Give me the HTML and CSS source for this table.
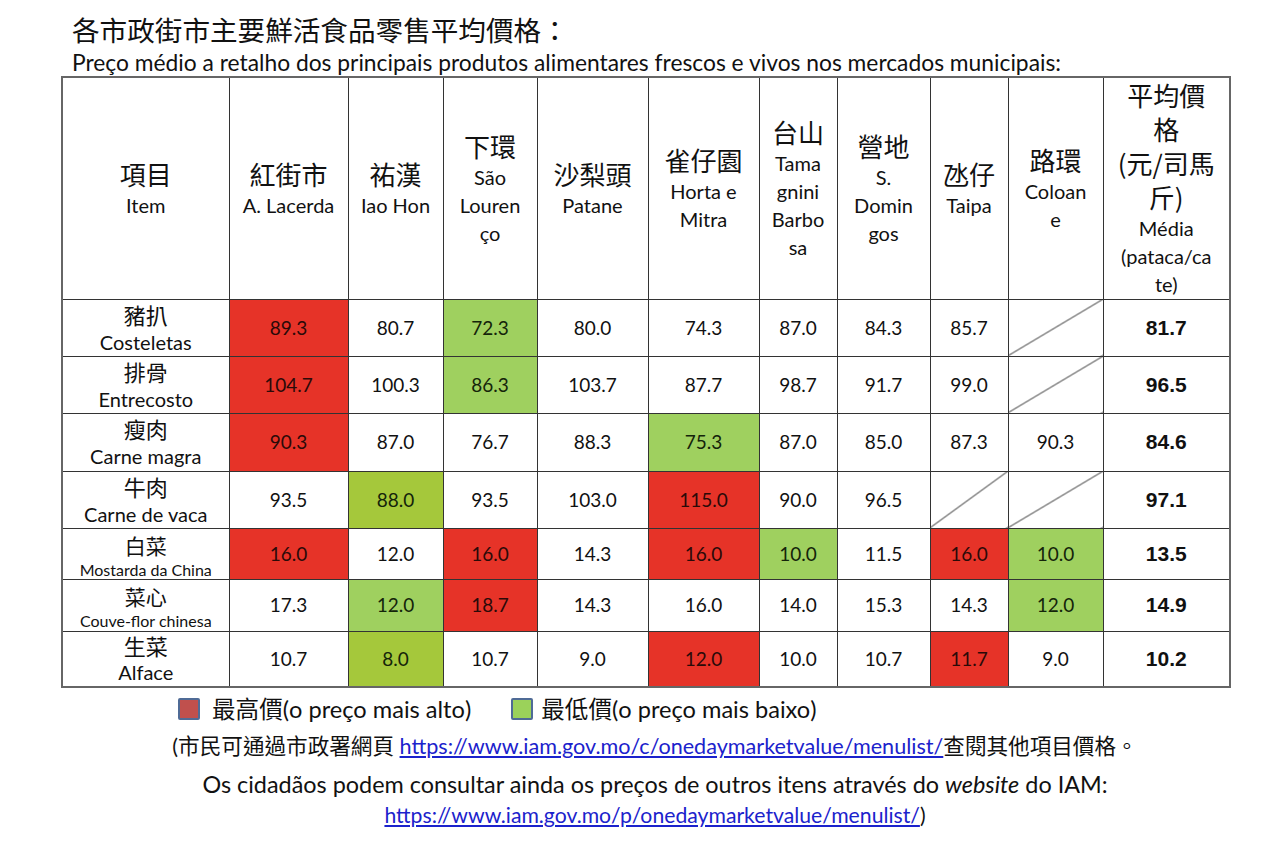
FILE: index.html
```html
<!DOCTYPE html>
<html lang="zh-Hant">
<head>
<meta charset="utf-8">
<title>各市政街市主要鮮活食品零售平均價格</title>
<link rel="stylesheet" href="styles.css">
</head>
<body>
<div class="page">
  <h1 class="title">各市政街市主要鮮活食品零售平均價格：</h1>
  <p class="subtitle">Preço médio a retalho dos principais produtos alimentares frescos e vivos nos mercados municipais:</p>
  <table class="prices">
    <colgroup>
      <col class="c-item"><col class="c-1"><col class="c-2"><col class="c-3"><col class="c-4"><col class="c-5"><col class="c-6"><col class="c-7"><col class="c-8"><col class="c-9"><col class="c-avg">
    </colgroup>
    <thead>
      <tr class="head">
        <th><span class="zh">項目</span><span class="pt">Item</span></th>
        <th><span class="zh">紅街市</span><span class="pt">A. Lacerda</span></th>
        <th><span class="zh">祐漢</span><span class="pt">Iao Hon</span></th>
        <th><span class="zh">下環</span><span class="pt">São<br>Louren<br>ço</span></th>
        <th><span class="zh">沙梨頭</span><span class="pt">Patane</span></th>
        <th><span class="zh">雀仔園</span><span class="pt">Horta e<br>Mitra</span></th>
        <th><span class="zh">台山</span><span class="pt">Tama<br>gnini<br>Barbo<br>sa</span></th>
        <th><span class="zh">營地</span><span class="pt">S.<br>Domin<br>gos</span></th>
        <th><span class="zh">氹仔</span><span class="pt">Taipa</span></th>
        <th><span class="zh">路環</span><span class="pt">Coloan<br>e</span></th>
        <th><span class="zh">平均價<br>格<br>(元/司馬<br>斤)</span><span class="pt">Média<br>(pataca/ca<br>te)</span></th>
      </tr>
    </thead>
    <tbody>
      <tr class="r1">
        <td class="item"><span class="zh">豬扒</span><span class="pt">Costeletas</span></td>
        <td class="hi">89.3</td><td>80.7</td><td class="lo">72.3</td><td>80.0</td><td>74.3</td><td>87.0</td><td>84.3</td><td>85.7</td><td class="na"></td><td class="avg">81.7</td>
      </tr>
      <tr class="r2">
        <td class="item"><span class="zh">排骨</span><span class="pt">Entrecosto</span></td>
        <td class="hi">104.7</td><td>100.3</td><td class="lo">86.3</td><td>103.7</td><td>87.7</td><td>98.7</td><td>91.7</td><td>99.0</td><td class="na"></td><td class="avg">96.5</td>
      </tr>
      <tr class="r3">
        <td class="item"><span class="zh">瘦肉</span><span class="pt">Carne magra</span></td>
        <td class="hi">90.3</td><td>87.0</td><td>76.7</td><td>88.3</td><td class="lo">75.3</td><td>87.0</td><td>85.0</td><td>87.3</td><td>90.3</td><td class="avg">84.6</td>
      </tr>
      <tr class="r4">
        <td class="item"><span class="zh">牛肉</span><span class="pt">Carne de vaca</span></td>
        <td>93.5</td><td class="lo2">88.0</td><td>93.5</td><td>103.0</td><td class="hi">115.0</td><td>90.0</td><td>96.5</td><td class="na"></td><td class="na"></td><td class="avg">97.1</td>
      </tr>
      <tr class="r5">
        <td class="item veg"><span class="zh">白菜</span><span class="pt small">Mostarda da China</span></td>
        <td class="hi">16.0</td><td>12.0</td><td class="hi">16.0</td><td>14.3</td><td class="hi">16.0</td><td class="lo">10.0</td><td>11.5</td><td class="hi">16.0</td><td class="lo">10.0</td><td class="avg">13.5</td>
      </tr>
      <tr class="r6">
        <td class="item veg"><span class="zh">菜心</span><span class="pt small">Couve-flor chinesa</span></td>
        <td>17.3</td><td class="lo">12.0</td><td class="hi">18.7</td><td>14.3</td><td>16.0</td><td>14.0</td><td>15.3</td><td>14.3</td><td class="lo">12.0</td><td class="avg">14.9</td>
      </tr>
      <tr class="r7">
        <td class="item"><span class="zh">生菜</span><span class="pt">Alface</span></td>
        <td>10.7</td><td class="lo2">8.0</td><td>10.7</td><td>9.0</td><td class="hi">12.0</td><td>10.0</td><td>10.7</td><td class="hi">11.7</td><td>9.0</td><td class="avg">10.2</td>
      </tr>
    </tbody>
  </table>

  <div class="legend">
    <span class="key"><span class="swatch swatch-hi"></span>最高價(o preço mais alto)</span>
    <span class="key"><span class="swatch swatch-lo"></span>最低價(o preço mais baixo)</span>
  </div>

  <div class="notes">
    <p class="note-zh">(市民可通過市政署網頁 <a href="#">https://www.iam.gov.mo/c/onedaymarketvalue/menulist/</a>查閱其他項目價格。</p>
    <p class="note-pt">Os cidadãos podem consultar ainda os preços de outros itens através do <em>website</em> do IAM:</p>
    <p class="note-link"><a href="#">https://www.iam.gov.mo/p/onedaymarketvalue/menulist/</a>)</p>
  </div>
</div>
</body>
</html>
```
FILE: styles.css
```css
html, body {
  margin: 0;
  padding: 0;
  background: #ffffff;
}

body {
  font-family: "Lato", "Noto Sans CJK TC", sans-serif;
  color: #111111;
}

.page {
  width: 1280px;
  height: 848px;
  padding: 9px 0 0 61px;
  box-sizing: border-box;
}

.title {
  margin: 0 0 0 11px;
  font-family: "Noto Sans CJK TC", sans-serif;
  font-weight: 400;
  font-size: 27.6px;
  line-height: 40px;
  color: #111111;
}

.subtitle {
  margin: 0 0 0 11px;
  font-size: 22.8px;
  line-height: 27px;
  color: #111111;
}

/* ---------- table ---------- */
.prices {
  margin-top: 0;
  width: 1168px;
  table-layout: fixed;
  border-collapse: collapse;
  border: 2px solid #666666;
}

.c-item { width: 167px; }
.c-1 { width: 119px; }
.c-2 { width: 95px; }
.c-3 { width: 94px; }
.c-4 { width: 111px; }
.c-5 { width: 111px; }
.c-6 { width: 78px; }
.c-7 { width: 93px; }
.c-8 { width: 78px; }
.c-9 { width: 95px; }
.c-avg { width: 127px; }

.prices th,
.prices td {
  border: 1px solid #333333;
  padding: 0;
  text-align: center;
  vertical-align: middle;
}

.prices th {
  font-weight: 400;
}

.head { height: 222px; }
.r1 { height: 56px; }
.r2 { height: 56px; }
.r3 { height: 58px; }
.r4 { height: 56px; }
.r5 { height: 50px; }
.r6 { height: 52px; }
.r7 { height: 56px; }

.zh,
.pt {
  display: block;
}

.head .zh {
  font-family: "Noto Sans CJK TC", sans-serif;
  font-size: 26px;
  line-height: 34px;
}

.head .pt {
  font-size: 20px;
  line-height: 28px;
}

.prices td {
  font-size: 19px;
  line-height: 24px;
  color: #111111;
}

.prices td.item .zh {
  font-family: "Noto Sans CJK TC", sans-serif;
  font-size: 22px;
  line-height: 28px;
}

.prices td.item .pt {
  font-size: 20px;
  line-height: 28px;
}

.r7 td.item .zh,
.r7 td.item .pt {
  line-height: 27px;
}

.prices td.item.veg {
  padding-top: 4px;
}

.prices td.item.veg .zh {
  font-size: 21px;
  line-height: 24px;
}

.prices td.item .pt.small {
  margin-top: 4px;
  font-size: 16px;
  line-height: 18px;
}

.prices td.hi { background: #e63328; color: #2a0a08; }
.prices td.lo { background: #9fd05f; color: #14240a; }
.prices td.lo2 { background: #a5c83b; color: #14240a; }

.prices td.na {
  background: linear-gradient(to bottom right,
    transparent calc(50% - 0.8px),
    #222222 50%,
    transparent calc(50% + 0.8px));
}

.prices td.avg {
  font-family: "Liberation Sans", Arial, sans-serif;
  font-weight: 700;
  font-size: 21px;
}

/* ---------- legend ---------- */
.legend {
  display: flex;
  align-items: center;
  gap: 40px;
  margin: 7px 0 0 117px;
  font-size: 23.6px;
  line-height: 28px;
}

.key {
  display: flex;
  align-items: center;
  gap: 12px;
}

.key + .key { gap: 8px; }

.swatch {
  width: 18px;
  height: 18px;
  border: 2px solid #4f6b96;
  border-radius: 2px;
}

.swatch-hi { background: #c0504d; }
.swatch-lo { background: #9bd25a; }

/* ---------- notes ---------- */
.notes {
  width: 1188px;
  text-align: center;
  margin-top: 9px;
}

.notes p {
  margin: 0;
}

.note-zh {
  font-size: 21.6px;
  line-height: 28px;
}

.note-pt {
  margin-top: 9px !important;
  font-size: 23.4px;
  line-height: 30px;
}

.note-link {
  margin-top: 2px !important;
  font-size: 21.2px;
  line-height: 28px;
}

.notes a {
  color: #1b22cc;
  text-decoration: underline;
}
```
